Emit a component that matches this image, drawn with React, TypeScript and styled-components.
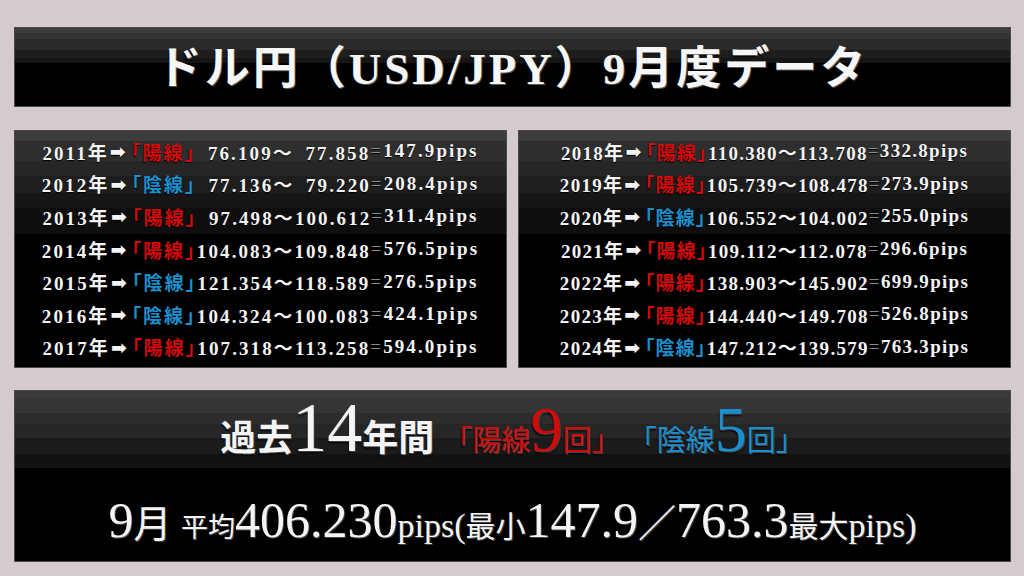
import styled, { createGlobalStyle } from 'styled-components';

const GlobalStyle = createGlobalStyle`
  html, body {
    margin: 0;
    padding: 0;
    background: #d3cbce;
  }
`;

const serif = `"Liberation Serif", "Noto Sans CJK JP", "DejaVu Sans", serif`;

type Kind = 'yo' | 'in';

const rowsLeft: [string, Kind, string, string, string][] = [
  ['2011', 'yo', '\u200776.109', '\u200777.858', '147.9'],
  ['2012', 'in', '\u200777.136', '\u200779.220', '208.4'],
  ['2013', 'yo', '\u200797.498', '100.612', '311.4'],
  ['2014', 'yo', '104.083', '109.848', '576.5'],
  ['2015', 'in', '121.354', '118.589', '276.5'],
  ['2016', 'in', '104.324', '100.083', '424.1'],
  ['2017', 'yo', '107.318', '113.258', '594.0'],
];

const rowsRight: [string, Kind, string, string, string][] = [
  ['2018', 'yo', '110.380', '113.708', '332.8'],
  ['2019', 'yo', '105.739', '108.478', '273.9'],
  ['2020', 'in', '106.552', '104.002', '255.0'],
  ['2021', 'yo', '109.112', '112.078', '296.6'],
  ['2022', 'yo', '138.903', '145.902', '699.9'],
  ['2023', 'yo', '144.440', '149.708', '526.8'],
  ['2024', 'in', '147.212', '139.579', '763.3'],
];

const Page = styled.div`
  width: 997px;
  padding: 27px 13px 14px 14px;
  font-family: ${serif};
  color: #f4f4f4;
`;

const TitleBar = styled.header`
  height: 80px;
  box-sizing: border-box;
  border: 1px solid #4a4a4a;
  padding-top: 5px;
  background: linear-gradient(
    to bottom,
    #3b3b3b 0 5px,
    #333 5px 11px,
    #2a2a2a 11px 22px,
    #1e1e1e 22px 30px,
    #151515 30px 35px,
    #000 35px
  );
  display: flex;
  align-items: center;
  justify-content: center;
`;

const Title = styled.h1`
  margin: 0;
  font-family: ${serif};
  font-size: 45px;
  font-weight: 700;
  letter-spacing: 3px;
  line-height: 1;
  color: #f6f6f6;
  text-shadow: 1px 1px 0 #555, 0 2px 2px #000;
`;

const Columns = styled.div`
  margin-top: 23px;
  display: grid;
  grid-template-columns: 493px 493px;
  column-gap: 11px;
`;

const Panel = styled.section`
  height: 238px;
  box-sizing: border-box;
  border: 1px solid #4a4a4a;
  padding: 4px 0;
  background: linear-gradient(
    to bottom,
    #3c3c3c 0 10px,
    #2e2e2e 10px 30px,
    #262626 30px 45px,
    #1e1e1e 45px 62px,
    #161616 62px 77px,
    #0e0e0e 77px 103px,
    #000 103px
  );
  display: flex;
  flex-direction: column;
`;

const Row = styled.div<{ $spacing: number }>`
  height: 32.6px;
  display: flex;
  align-items: center;
  justify-content: center;
  white-space: pre;
  font-family: ${serif};
  font-size: 19px;
  font-weight: 700;
  letter-spacing: ${(p) => p.$spacing}px;
  font-feature-settings: 'palt';
  text-shadow: 0 1px 1px #000;
`;

const Arrow = styled.span`
  font-family: "DejaVu Sans", sans-serif;
  font-size: 19px;
  margin: 0 3px 0 1px;
`;

const Tag = styled.span<{ $kind: Kind }>`
  color: ${(p) => (p.$kind === 'yo' ? '#d30a0a' : '#1b8fcc')};
`;

const Eq = styled.span`
  color: #8a8a8a;
  font-weight: 400;
`;

const Summary = styled.section`
  margin-top: 22px;
  height: 172px;
  box-sizing: border-box;
  border: 1px solid #4a4a4a;
  background: linear-gradient(
    to bottom,
    #3a3a3a 0 7px,
    #353535 7px 22px,
    #2c2c2c 22px 33px,
    #262626 33px 47px,
    #1b1b1b 47px 63px,
    #121212 63px 77px,
    #000 77px
  );
  display: flex;
  flex-direction: column;
  align-items: center;
  padding-top: 2px;
`;

const Line = styled.div<{ $top: number }>`
  margin-top: ${(p) => p.$top}px;
  display: flex;
  align-items: baseline;
  white-space: pre;
  text-shadow: 1px 1px 0 #444, 0 2px 2px #000;
`;

const Part = styled.span<{ $size: number; $color?: string; $bold?: boolean }>`
  font-family: "Liberation Serif", "Noto Sans CJK JP", serif;
  font-size: ${(p) => p.$size}px;
  color: ${(p) => p.$color ?? '#f4f4f4'};
  font-weight: ${(p) => (p.$bold ? 700 : 400)};
  line-height: 1;
`;

function DataRow({ row, spacing }: { row: [string, Kind, string, string, string]; spacing: number }) {
  const [year, kind, from, to, pips] = row;
  return (
    <Row $spacing={spacing}>
      {year}年<Arrow>➡</Arrow>
      <Tag $kind={kind}>「{kind === 'yo' ? '陽線' : '陰線'}」</Tag>
      {from}〜{to}
      <Eq>=</Eq>
      {pips}pips
    </Row>
  );
}

const red = '#cf0a0a';
const blue = '#1a8fcf';

export default function App() {
  return (
    <>
      <GlobalStyle />
      <Page>
        <TitleBar>
          <Title>ドル円（USD/JPY）9月度データ</Title>
        </TitleBar>

        <Columns>
          <Panel>
            {rowsLeft.map((r) => (
              <DataRow key={r[0]} row={r} spacing={2.1} />
            ))}
          </Panel>
          <Panel>
            {rowsRight.map((r) => (
              <DataRow key={r[0]} row={r} spacing={1.3} />
            ))}
          </Panel>
        </Columns>

        <Summary>
          <Line $top={0}>
            <Part $size={36} $bold>過去</Part>
            <Part $size={70}>14</Part>
            <Part $size={36} $bold>年間 </Part>
            <Part $size={29} $color={red}>「陽線</Part>
            <Part $size={64} $color={red}>9</Part>
            <Part $size={29} $color={red}>回」 </Part>
            <Part $size={29} $color={blue}>「陰線</Part>
            <Part $size={64} $color={blue}>5</Part>
            <Part $size={29} $color={blue}>回」</Part>
          </Line>
          <Line $top={32}>
            <Part $size={50}>9</Part>
            <Part $size={38}>月 </Part>
            <Part $size={27}>平均</Part>
            <Part $size={50}>406.230</Part>
            <Part $size={34}>pips(</Part>
            <Part $size={30}>最小</Part>
            <Part $size={50}>147.9</Part>
            <Part $size={38}>／</Part>
            <Part $size={50}>763.3</Part>
            <Part $size={30}>最大</Part>
            <Part $size={34}>pips)</Part>
          </Line>
        </Summary>
      </Page>
    </>
  );
}
